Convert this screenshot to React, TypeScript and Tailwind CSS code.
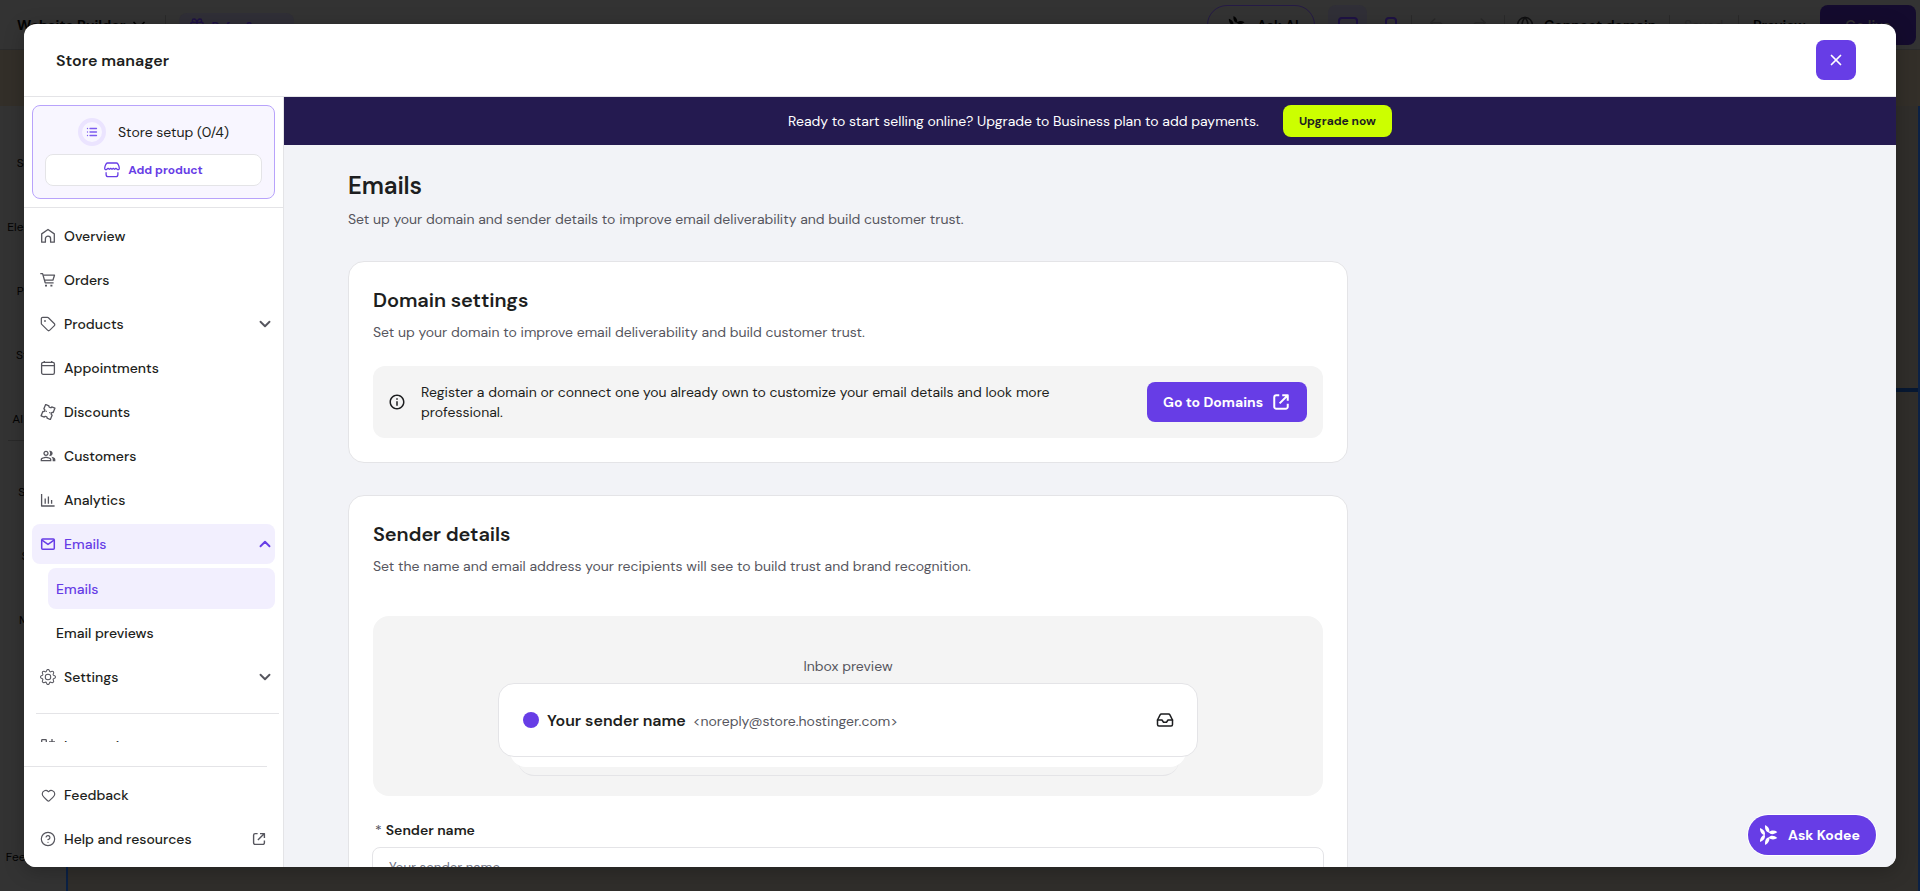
import type { ReactNode } from 'react';
import {
  ChevronDown, ChevronUp, Gift, Globe, Heart, HelpCircle, Inbox, List, Redo2, Tag, Undo2, X
} from 'lucide-react';
import { BsGear } from 'react-icons/bs';
import { MdInfoOutline, MdOutlinePeopleAlt } from 'react-icons/md';

// Icons

const Icon = ({ children, className = 'size-4', stroke = 1.3 }: {
  children: ReactNode;
  className?: string;
  stroke?: number;
}) => (
  <svg
    viewBox="0 0 16 16"
    className={`shrink-0 ${className}`}
    fill="none"
    stroke="currentColor"
    strokeWidth={stroke}
    strokeLinejoin="round"
  >
    {children}
  </svg>
);

const HomeIcon = () => (
  <Icon>
    <path d="M1.7 5.9 8 1.5l6.3 4.4v8.3h-3.7v-3.4a2.6 2.6 0 0 0-5.2 0v3.4H1.7Z" />
  </Icon>
);

const CartIcon = () => (
  <Icon>
    <path d="M.3 1.6h2.3l2.6 9.2h8.4" />
    <path d="M3.2 3.2h11.3l-1.6 5H4.7" />
    <path d="M5 13.7h2M10.4 13.7h2" strokeWidth={1.8} />
  </Icon>
);

const CalendarIcon = () => (
  <Icon>
    <rect x="1.6" y="2.3" width="12.8" height="12" rx="1.6" />
    <path d="M1.6 5.6h12.8M4.3.9v1.4M11.7.9v1.4" />
  </Icon>
);

const TicketIcon = () => (
  <Icon>
    <g transform="rotate(22 8 8)">
      <path d="M3 1.9h3.5a1.5 1.2 0 0 0 3 0H13v4.7a1.4 1.4 0 0 0 0 2.8v4.7H9.5a1.5 1.2 0 0 0-3 0H3V9.4a1.400 1.400 0 0 0 0-2.800Z" />
      <path d="M5.4 8h1.3M9.300 8h1.300" />
    </g>
  </Icon>
);

const ChartIcon = () => (
  <Icon>
    <path d="M1.6 2v12h13M5.2 11.8V6.4M8.4 11.8V4.6M11.6 11.8V8" />
  </Icon>
);

const MailIcon = () => (
  <Icon stroke={1.5}>
    <rect x="1.7" y="3" width="12.6" height="10.2" rx="1" />
    <path d="M2 4.2 8 8.4l6-4.2" />
  </Icon>
);

const IntegrationsIcon = () => (
  <Icon>
    <rect x="1.7" y="1.7" width="4.6" height="4.6" rx=".6" />
    <rect x="1.7" y="9.7" width="4.6" height="4.6" rx=".6" />
    <rect x="9.7" y="9.7" width="4.6" height="4.6" rx=".6" />
    <path d="M12 1v6M9 4h6" />
  </Icon>
);

const ExternalIcon = ({ className, stroke }: { className?: string; stroke?: number }) => (
  <Icon className={className} stroke={stroke}>
    <path d="M6.6 2.6H4.2a1.6 1.6 0 0 0-1.6 1.6v7.6a1.6 1.6 0 0 0 1.6 1.6h7.6a1.6 1.6 0 0 0 1.6-1.6V9.4" />
    <path d="M9 2.6h4.4V7M13.4 2.6 6.9 9.1" />
  </Icon>
);

const StoreIcon = () => (
  <Icon>
    <path d="M3.4 1h9.2c1.4 0 2.7 3.4 2.7 5.4 0 1.2-1.2 1.7-2.1.9l-1.3-.9-1.3.9-1.3-.9-1.3.9-1.3-.9-1.3.9-1.3-.9-1.3.9C2 8.1.7 7.6.7 6.4.7 4.4 2 1 3.4 1Z" />
    <path d="M2.1 10.2v2.2a2.2 2.2 0 0 0 2.2 2.2h7.4a2.2 2.2 0 0 0 2.2-2.2v-2.2" />
  </Icon>
);

const KodeeIcon = ({ className }: { className?: string }) => (
  <svg viewBox="0 0 18 20" className={`shrink-0 ${className}`} fill="currentColor">
    {[0, 120, 240].map((angle) => (
      <g key={angle} transform={`rotate(${angle} 7.5 10)`}>
        <path d="M0 3C3.6 4.3 6 7.2 4.6 10.3 1.7 9.5-.3 6.5 0 3Z" />
        <path d="M0 17C3.6 15.7 6 12.8 4.6 9.7 1.7 10.5-.3 13.5 0 17Z" />
      </g>
    ))}
  </svg>
);

// Builder behind the modal

const RAIL_TOP = ['Setup', 'Elements', 'Pages', 'Styles', 'AI tools'];
const RAIL_BOTTOM = ['Store', 'SEO', 'More'];

const RailItem = ({ label }: { label: string }) => (
  <div className="flex h-16 shrink-0 items-end justify-center pb-px text-xs">{label}</div>
);

const Divider = ({ className }: { className?: string }) => (
  <div className={`h-5 w-px bg-[#2a2a2a] ${className}`} />
);

const Builder = () => (
  <div className="flex h-full flex-col bg-[#302e2b] text-[#030303]">
    <div className="flex h-[50px] shrink-0 items-center border-b border-[#2b2b2b] bg-[#333] pr-1 pl-[17px] text-sm font-semibold">
      <span className="font-bold">Website Builder</span>
      <ChevronDown className="ml-1 size-5" />
      <Divider className="ml-4" />
      <div className="ml-[13px] flex h-6 items-center gap-1.5 rounded-lg bg-[#302f37] px-2.5 text-[#1f1245]">
        <Gift className="size-4" />
        <span className="pt-0.5 text-xs font-bold whitespace-nowrap">Refer &amp; earn</span>
      </div>
      <div className="ml-auto flex h-10 w-[108px] items-center gap-[11px] rounded-full border border-[#251a45] pl-5">
        <KodeeIcon className="size-[18px]" />
        <span>Ask AI</span>
      </div>
      <div className="ml-[13px] flex h-10 w-[39px] items-center justify-center rounded-lg bg-[#302f37]">
        <div className="h-4 w-5 rounded-sm border-2 border-[#1f1245]" />
      </div>
      <div className="ml-[18px] h-4 w-3 rounded-sm border-2 border-[#1f1245]" />
      <Divider className="ml-3.5" />
      <Undo2 className="ml-4 size-[18px] text-[#292929]" />
      <Redo2 className="ml-6 size-[18px] text-[#292929]" />
      <Divider className="ml-4" />
      <Globe className="ml-[11px] size-[18px] text-[#111112]" />
      <span className="ml-2.5 w-[115px] whitespace-nowrap">Connect domain</span>
      <Divider className="ml-2.5" />
      <span className="ml-3.5 w-10 font-normal text-[#2a2a2a]">Saved</span>
      <Divider className="ml-3.5" />
      <span className="ml-3.5 w-[53px]">Preview</span>
      <div className="ml-[14px] flex h-10 w-24 items-center justify-center rounded-lg bg-[#140b2e] text-[#333]">
        Go live
      </div>
    </div>
    <div className="h-14 shrink-0 bg-[#332f29]" />
    <div className="flex min-h-0 flex-1">
      <div className="flex w-[66px] flex-col bg-[#333] pt-0.5">
        {RAIL_TOP.map((label) => <RailItem key={label} label={label} />)}
        <div className="mx-2 mt-3 mb-[-4px] h-px shrink-0 bg-[#292929]" />
        {RAIL_BOTTOM.map((label) => <RailItem key={label} label={label} />)}
        <div className="mt-auto pb-[26px] text-center text-xs">Feedback</div>
      </div>
      <div className="flex flex-1 flex-col border-x-2 border-[#0b2145]">
        <div className="h-[286px] border-b-4 border-[#071832]" />
      </div>
    </div>
  </div>
);

// Sidebar

type NavItemProps = {
  icon: ReactNode;
  label: string;
  active?: boolean;
  right?: ReactNode;
};

const NavItem = ({ icon, label, active, right }: NavItemProps) => (
  <div
    className={`flex h-10 shrink-0 items-center rounded-lg pl-2 text-sm font-medium ${
      active ? 'bg-[#f2effe] text-[#673de6]' : 'text-[#1d1e20]'
    }`}
  >
    <span className={`mr-2 flex size-4 items-center justify-center ${active ? '' : 'text-[#56565e]'}`}>
      {icon}
    </span>
    <span className="flex-1">{label}</span>
    {right}
  </div>
);

const NAV_ITEMS: NavItemProps[] = [
  { icon: <HomeIcon />, label: 'Overview' },
  { icon: <CartIcon />, label: 'Orders' },
  {
    icon: <Tag className="size-4" strokeWidth={1.8} />,
    label: 'Products',
    right: <ChevronDown className="mr-px size-[18px] text-[#56565e]" strokeWidth={2.5} />,
  },
  { icon: <CalendarIcon />, label: 'Appointments' },
  { icon: <TicketIcon />, label: 'Discounts' },
  { icon: <MdOutlinePeopleAlt className="size-4 shrink-0" />, label: 'Customers' },
  { icon: <ChartIcon />, label: 'Analytics' },
  {
    icon: <MailIcon />,
    label: 'Emails',
    active: true,
    right: <ChevronUp className="mr-px size-[18px]" strokeWidth={2.5} />,
  },
];

const Sidebar = () => (
  <aside className="flex w-[260px] shrink-0 flex-col border-r border-[#e4e4e7] bg-white">
    <div className="border-b border-[#e4e4e7] p-2">
      <div className="flex flex-col gap-2 rounded-lg border border-[#b8a3fb] bg-[#f8f6ff] p-3">
        <div className="flex items-center justify-center gap-3">
          <div className="flex size-7 items-center justify-center rounded-full border-4 border-[#ebe4ff] text-[#7c5cf0]">
            <List className="size-3" strokeWidth={2.6} />
          </div>
          <span className="text-sm">Store setup (0/4)</span>
        </div>
        <div className="flex h-8 items-center justify-center gap-2 rounded-lg border border-[#e4e4e7] bg-white text-xs font-bold text-[#673de6]">
          <StoreIcon />
          Add product
        </div>
      </div>
    </div>

    <nav className="flex h-[534px] flex-col gap-1 overflow-hidden p-2">
      {NAV_ITEMS.map((item) => <NavItem key={item.label} {...item} />)}
      <div className="ml-4 flex h-[41px] shrink-0 items-center rounded-lg bg-[#f2effe] pl-2 text-sm font-medium text-[#673de6]">
        Emails
      </div>
      <div className="ml-4 flex h-10 shrink-0 items-center pl-2 text-sm font-medium">
        Email previews
      </div>
      <NavItem
        icon={<BsGear className="size-4" />}
        label="Settings"
        right={<ChevronDown className="mr-px size-[18px] text-[#56565e]" strokeWidth={2.5} />}
      />
      <div className="mt-3 -mr-1 ml-1 h-px shrink-0 bg-[#e4e4e7]" />
      <div className="mt-2 flex shrink-0 flex-col">
        <NavItem icon={<IntegrationsIcon />} label="Integrations" />
      </div>
    </nav>

    <div className="mt-auto flex w-[243px] flex-col gap-1 border-t border-[#e4e4e7] py-2 pl-2">
      <NavItem icon={<Heart className="size-[15px]" strokeWidth={1.9} />} label="Feedback" />
      <NavItem
        icon={<HelpCircle className="size-4" strokeWidth={1.8} />}
        label="Help and resources"
        right={<ExternalIcon className="size-4 text-[#56565e]" stroke={1.4} />}
      />
    </div>
  </aside>
);

// Content

const Card = ({ title, description, children }: {
  title: string;
  description: string;
  children: ReactNode;
}) => (
  <section className="mt-8 w-[1000px] rounded-2xl border border-[#e4e4e7] bg-white p-6">
    <h2 className="text-xl leading-7 font-semibold tracking-[-0.1px]">{title}</h2>
    <p className="mt-2 text-sm text-[#56565e]">{description}</p>
    {children}
  </section>
);

const InboxPreview = () => (
  <div className="mt-10 flex h-[180px] flex-col items-center rounded-2xl bg-[#f4f4f4] pt-10">
    <p className="text-sm text-[#56565e]">Inbox preview</p>
    <div className="z-20 mt-[7px] flex h-[74px] w-[700px] shrink-0 items-center rounded-2xl border border-[#e4e4e7] bg-white pr-[23px] pl-6">
      <div className="size-4 rounded-full bg-[#673de6]" />
      <span className="ml-2 pt-0.5 font-semibold">Your sender name</span>
      <span className="ml-[7px] flex-1 pt-0.5 text-sm text-[#56565e]">&lt;noreply@store.hostinger.com&gt;</span>
      <Inbox className="size-[18px]" />
    </div>
    <div className="z-10 -mt-6 h-[34px] w-[676px] shrink-0 rounded-b-2xl bg-white" />
    <div className="-mt-6 h-[33px] w-[661px] shrink-0 rounded-b-2xl border-b border-[#e4e4e7]" />
  </div>
);

const EmailSettings = () => (
  <div className="min-h-0 flex-1 overflow-hidden bg-[#f2f3f7] pt-[25px] pl-16">
    <h1 className="text-2xl font-semibold tracking-[-0.15px]">Emails</h1>
    <p className="mt-[7px] text-sm text-[#56565e]">
      Set up your domain and sender details to improve email deliverability and build customer trust.
    </p>

    <Card
      title="Domain settings"
      description="Set up your domain to improve email deliverability and build customer trust."
    >
      <div className="mt-6 flex h-[72px] items-center rounded-xl bg-[#f4f4f4] px-4">
        <MdInfoOutline className="-ml-px size-[18px]" />
        <p className="ml-[15px] w-[660px] text-sm">
          Register a domain or connect one you already own to customize your email details and look more professional.
        </p>
        <button className="ml-auto flex h-10 w-40 items-center justify-between rounded-lg bg-[#673de6] px-4 text-sm font-bold text-white">
          Go to Domains
          <ExternalIcon className="size-5" stroke={1.6} />
        </button>
      </div>
    </Card>

    <Card
      title="Sender details"
      description="Set the name and email address your recipients will see to build trust and brand recognition."
    >
      <InboxPreview />
      <label className="mt-6 block pl-0.5 text-sm font-semibold">
        <span className="mr-1 font-normal text-[#56565e]">*</span>
        Sender name
      </label>
      <div className="-mx-px mt-[7px] flex h-10 items-center rounded-lg border border-[#e4e4e7] px-4 pt-px text-[13.3px] text-[#727586]">
        Your sender name
      </div>
    </Card>
  </div>
);

const StoreManagerModal = () => (
  <div className="absolute inset-6 flex flex-col overflow-hidden rounded-xl bg-white text-[#1d1e20] shadow-[0_4px_20px_rgba(0,0,0,0.25)]">
    <header className="flex h-[73px] shrink-0 items-center justify-between border-b border-[#e4e4e7] pr-10 pl-8">
      <span className="pt-0.5 font-semibold">Store manager</span>
      <button className="flex size-10 items-center justify-center rounded-lg bg-[#673de6] text-white">
        <X className="size-[18px]" strokeWidth={2.3} />
      </button>
    </header>

    <div className="flex min-h-0 flex-1">
      <Sidebar />
      <main className="flex min-w-0 flex-1 flex-col">
        <div className="flex h-12 shrink-0 items-center justify-center gap-6 bg-[#241a50] text-sm text-white">
          Ready to start selling online? Upgrade to Business plan to add payments.
          <button className="h-8 rounded-lg bg-[#ccff00] px-4 text-xs font-bold text-[#1d1e20]">
            Upgrade now
          </button>
        </div>
        <EmailSettings />
      </main>
    </div>

    <button className="absolute right-5 bottom-3 flex h-10 w-32 items-center gap-2.5 rounded-full bg-[#673de6] pl-3 text-sm font-bold text-white ring-1 ring-white">
      <KodeeIcon className="h-5 w-[18px]" />
      Ask Kodee
    </button>
  </div>
);

export default function App() {
  return (
    <div className="relative h-screen overflow-hidden font-['DM_Sans','Inter',sans-serif]">
      <Builder />
      <StoreManagerModal />
    </div>
  );
}
